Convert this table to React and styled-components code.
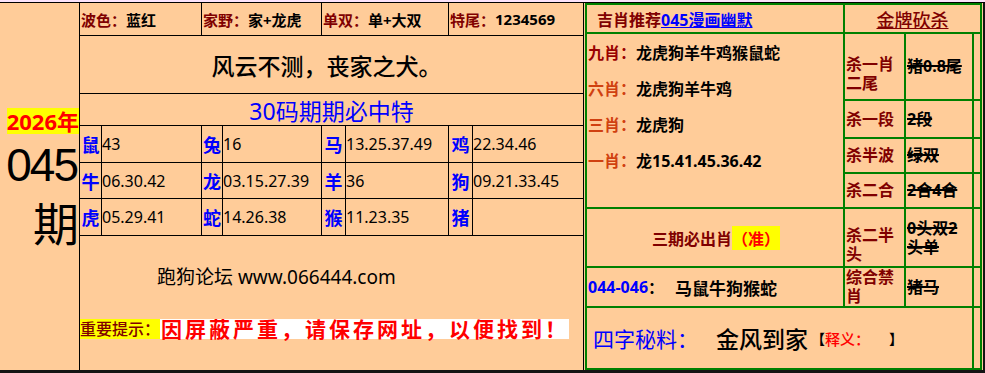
import React from "react";
import styled, { createGlobalStyle } from "styled-components";

const PEACH = "#ffcc99";
const GREEN = "#008000";
const MAROON = "#800000";
const BLUE = "#0000ff";

const GlobalStyle = createGlobalStyle`
  html, body {
    margin: 0;
    padding: 0;
    background: #fbe3fb;
  }
  body {
    font-family: "Noto Sans", "Noto Sans CJK SC", sans-serif;
    color: #000;
  }
`;

const Board = styled.div`
  margin-top: 2px;
  width: 985px;
  height: 371px;
  box-sizing: border-box;
  border-top: 1px solid #000;
  border-bottom: 3px solid #141414;
  display: flex;
  background: ${PEACH};
`;

const IssueColumn = styled.div`
  width: 80px;
  box-sizing: border-box;
  border-right: 1px solid #000;
  display: flex;
  flex-direction: column;
  align-items: flex-end;
  padding-top: 105px;
`;

const Year = styled.span`
  display: inline-block;
  background: #ffff00;
  color: #ff0000;
  font-size: 22px;
  font-weight: bold;
  line-height: 26px;
  height: 26px;
`;

const IssueNo = styled.span`
  margin-top: 4px;
  margin-right: 2px;
  font-family: "Liberation Sans", Arial, sans-serif;
  font-size: 46px;
  letter-spacing: -2px;
  line-height: normal;
`;

const IssueWord = styled.span`
  margin-top: -4px;
  font-size: 46px;
  line-height: normal;
`;

const InfoGrid = styled.div`
  width: 504px;
  box-sizing: border-box;
  display: grid;
  grid-template-columns: 21px 99px 20px 98px 23px 102px 23px 110px;
  grid-template-rows: 32px 57px 31px 36px 35px 36px 134px;
  gap: 1px;
  background: #000;
  border-right: 1px solid #000;
`;

const Cell = styled.div`
  background: ${PEACH};
  display: flex;
  align-items: center;
  grid-column: span ${(p) => p.$span || 1};
  justify-content: ${(p) => (p.$center ? "center" : "flex-start")};
  white-space: nowrap;
`;

const TopItem = styled(Cell)`
  font-size: 15px;
  font-weight: bold;
  padding-left: 1px;
`;

const Tag = styled.span`
  color: ${(p) => p.$color || MAROON};
`;

const Motto = styled(Cell)`
  font-size: 23px;
  font-weight: 500;
  padding-right: 10px;
`;

const Banner = styled(Cell)`
  font-size: 23px;
  color: ${BLUE};
`;

const ZodiacName = styled(Cell)`
  font-size: 18px;
  font-weight: bold;
  color: ${BLUE};
  justify-content: center;
`;

const ZodiacNums = styled(Cell)`
  font-size: 16px;
`;

const FootCell = styled.div`
  grid-column: span 8;
  background: ${PEACH};
  display: flex;
  flex-direction: column;
`;

const SiteLine = styled.div`
  margin-top: 29px;
  padding-left: 77px;
  font-size: 19px;
  line-height: 24px;
`;

const Notice = styled.div`
  margin-top: 30px;
  display: flex;
  align-items: center;
`;

const NoticeTag = styled.span`
  display: inline-block;
  height: 20px;
  line-height: 20px;
  background: #ffff00;
  color: ${MAROON};
  font-size: 16px;
  font-weight: 500;
`;

const NoticeText = styled.span`
  display: inline-block;
  height: 20px;
  line-height: 20px;
  background: #fff;
  color: #ff0000;
  font-size: 21px;
  font-weight: bold;
  letter-spacing: 3px;
  padding-left: 1px;
`;

const SidePanel = styled.div`
  width: 401px;
  box-sizing: border-box;
  padding: 0 1px;
  border-right: 2px solid #141414;
`;

const GreenGrid = styled.div`
  height: 100%;
  box-sizing: border-box;
  display: grid;
  grid-template-columns: 256px 59px 66px 6px;
  grid-template-rows: 27px 65px 36px 33px 33px 57px 38px 60px;
  gap: 2px;
  border: 2px solid ${GREEN};
  background: ${GREEN};
`;

const Box = styled.div`
  background: ${PEACH};
  display: flex;
  align-items: center;
  grid-column: span ${(p) => p.$span || 1};
  justify-content: ${(p) => (p.$center ? "center" : "flex-start")};
`;

const PickHead = styled(Box)`
  padding-left: 10px;
  font-size: 16px;
  font-weight: bold;
  color: ${MAROON};
  white-space: nowrap;
`;

const PickLink = styled.span`
  color: ${BLUE};
  text-decoration: underline;
`;

const KillHead = styled(Box)`
  font-size: 18px;
  font-weight: 500;
  color: ${MAROON};
  text-decoration: underline;
`;

const XiaoBlock = styled.div`
  grid-row: span 4;
  background: ${PEACH};
  display: flex;
  flex-direction: column;
  padding-left: 1px;
`;

const XiaoLine = styled.div`
  height: 36px;
  display: flex;
  align-items: center;
  font-size: 16px;
  font-weight: bold;
  white-space: nowrap;
`;

const KillLabel = styled(Box)`
  font-size: 16px;
  font-weight: bold;
  line-height: 19px;
  color: ${MAROON};
  padding: ${(p) => (p.$low ? "14px 0 0 1px" : "0 0 0 1px")};
`;

const KillValue = styled(Box)`
  font-size: 16px;
  font-weight: bold;
  line-height: 19px;
  padding-left: 1px;
`;

const Struck = styled.span`
  text-decoration-line: line-through;
  text-decoration-color: #000;
  text-decoration-thickness: 2px;
`;

const MustRow = styled(Box)`
  font-size: 16px;
  font-weight: bold;
  color: ${MAROON};
  padding-left: 2px;
`;

const Sure = styled.span`
  background: #ffff00;
  color: #ff0000;
`;

const RangeRow = styled(Box)`
  padding-left: 1px;
  font-size: 16px;
  font-weight: bold;
  white-space: nowrap;
`;

const RangeNums = styled.span`
  margin-left: 11px;
  font-size: 17px;
`;

const SecretRow = styled(Box)`
  padding-left: 6px;
  white-space: nowrap;
`;

const SecretTag = styled.span`
  font-size: 21px;
  color: ${BLUE};
`;

const SecretWord = styled.span`
  margin-left: 18px;
  font-size: 23px;
  font-weight: 500;
`;

const Bracket = styled.span`
  font-size: 14px;
  font-weight: bold;
  margin-left: 3px;
`;

const Gloss = styled.span`
  color: #ff0000;
  font-size: 15px;
  font-weight: 500;
  margin-right: 16px;
`;

const topItems = [
  ["波色：", "蓝红"],
  ["家野：", "家+龙虎"],
  ["单双：", "单+大双"],
  ["特尾：", "1234569"],
];

const zodiacRows = [
  [["鼠", "43"], ["兔", "16"], ["马", "13.25.37.49"], ["鸡", "22.34.46"]],
  [["牛", "06.30.42"], ["龙", "03.15.27.39"], ["羊", "36"], ["狗", "09.21.33.45"]],
  [["虎", "05.29.41"], ["蛇", "14.26.38"], ["猴", "11.23.35"], ["猪", ""]],
];

const xiaoLines = [
  ["九肖：", "龙虎狗羊牛鸡猴鼠蛇", "#990000"],
  ["六肖：", "龙虎狗羊牛鸡", "#d04010"],
  ["三肖：", "龙虎狗", "#d04010"],
  ["一肖：", "龙15.41.45.36.42", "#d04010"],
];

const kills = [
  { label: "杀一肖二尾", value: "猪0.8尾", low: true },
  { label: "杀一段", value: "2段" },
  { label: "杀半波", value: "绿双" },
  { label: "杀二合", value: "2合4合" },
];

const KillRow = ({ label, value, low }) => (
  <>
    <KillLabel $low={low}>{label}</KillLabel>
    <KillValue>
      <Struck>{value}</Struck>
    </KillValue>
    <Box />
  </>
);

export default function App() {
  return (
    <>
      <GlobalStyle />
      <Board>
        <IssueColumn>
          <Year>2026年</Year>
          <IssueNo>045</IssueNo>
          <IssueWord>期</IssueWord>
        </IssueColumn>

        <InfoGrid>
          {topItems.map(([tag, val]) => (
            <TopItem key={tag} $span={2}>
              <Tag>{tag}</Tag>
              {val}
            </TopItem>
          ))}
          <Motto $span={8} $center>风云不测，丧家之犬。</Motto>
          <Banner $span={8} $center>30码期期必中特</Banner>
          {zodiacRows.map((row) =>
            row.map(([name, nums]) => (
              <React.Fragment key={name}>
                <ZodiacName>{name}</ZodiacName>
                <ZodiacNums>{nums}</ZodiacNums>
              </React.Fragment>
            ))
          )}
          <FootCell>
            <SiteLine>跑狗论坛 www.066444.com</SiteLine>
            <Notice>
              <NoticeTag>重要提示：</NoticeTag>
              <NoticeText>因屏蔽严重，请保存网址，以便找到！</NoticeText>
            </Notice>
          </FootCell>
        </InfoGrid>

        <SidePanel>
          <GreenGrid>
            <PickHead>
              吉肖推荐<PickLink>045漫画幽默</PickLink>
            </PickHead>
            <KillHead $span={3} $center>金牌砍杀</KillHead>

            <XiaoBlock>
              {xiaoLines.map(([tag, val, color]) => (
                <XiaoLine key={tag}>
                  <Tag $color={color}>{tag}</Tag>
                  {val}
                </XiaoLine>
              ))}
            </XiaoBlock>
            {kills.map((k) => (
              <KillRow key={k.label} {...k} />
            ))}

            <MustRow $center>
              三期必出肖<Sure>（准）</Sure>
            </MustRow>
            <KillRow label="杀二半头" value="0头双2头单" low />

            <RangeRow>
              <Tag $color={BLUE}>044-046</Tag>：
              <RangeNums>马鼠牛狗猴蛇</RangeNums>
            </RangeRow>
            <KillRow label="综合禁肖" value="猪马" />

            <SecretRow $span={3}>
              <SecretTag>四字秘料：</SecretTag>
              <SecretWord>金风到家</SecretWord>
              <Bracket>【</Bracket>
              <Gloss>释义：</Gloss>
              <Bracket>】</Bracket>
            </SecretRow>
            <Box />
          </GreenGrid>
        </SidePanel>
      </Board>
    </>
  );
}
